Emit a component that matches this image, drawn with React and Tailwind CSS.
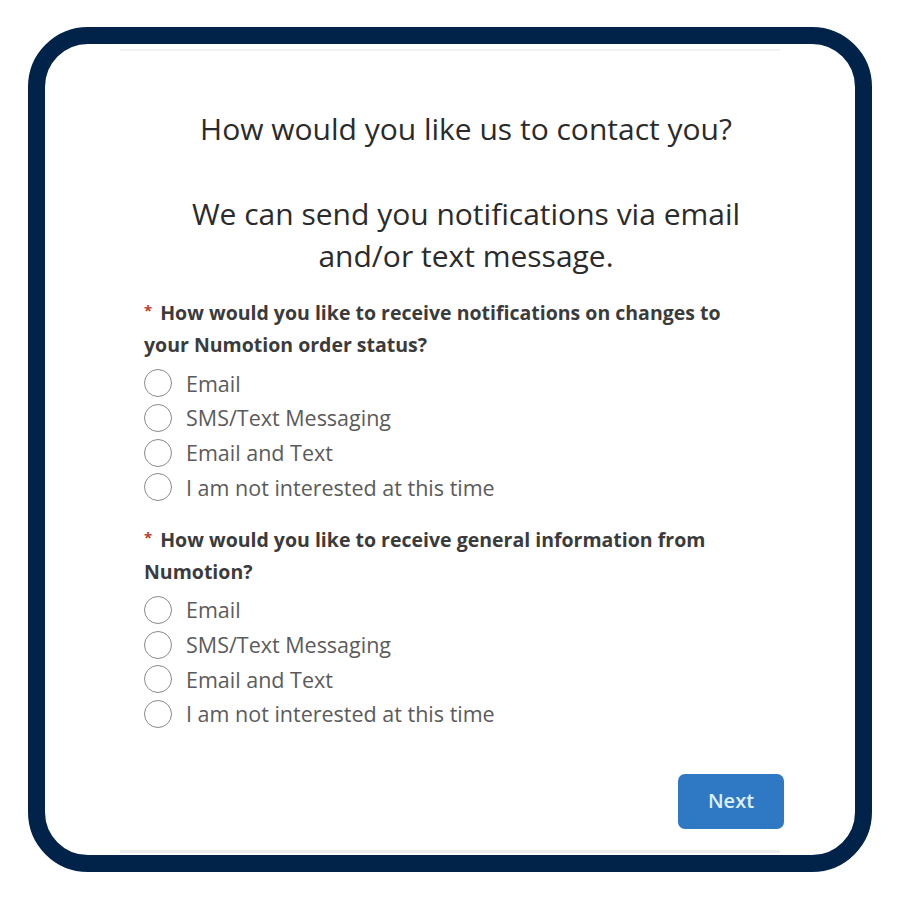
import React from "react";

const OPTIONS = ["Email", "SMS/Text Messaging", "Email and Text", "I am not interested at this time"];

function Radio({ label }) {
  return (
    <label className="flex items-center h-[34.7px]">
      <span className="w-[28px] h-[28px] rounded-full border-[1.5px] border-[#8a8a8a] bg-white shrink-0" />
      <span className="ml-[14px] text-[21.5px] text-[#5b5b5b] leading-none">{label}</span>
    </label>
  );
}

function Question({ children }) {
  return (
    <div>
      <p className="max-w-[600px] text-[19.5px] font-bold text-[#3b3b3b] leading-[32px]">
        <span className="inline-block text-[#c23934] text-[15px] leading-none align-top mt-[6px] mr-[8px]">*</span>
        {children}
      </p>
      <div className="mt-[5px] flex flex-col">
        {OPTIONS.map((o) => (
          <Radio key={o} label={o} />
        ))}
      </div>
    </div>
  );
}

export default function App() {
  return (
    <div className="w-[900px] h-[900px] bg-white pt-[27px] pl-[28px]" style={{ fontFamily: '"Open Sans", "Noto Sans", sans-serif' }}>
      <div className="w-[844px] h-[845px] border-[17px] border-[#012249] rounded-[60px] bg-white overflow-hidden flex flex-col">
        <div className="mx-[75px] h-[2px] bg-[#f2f2f2] mt-[5px]" />
        <div className="pl-[99px] pr-[67px] pt-[58px] flex flex-col flex-1">
          <h1 className="text-center text-[30px] text-[#2b2b2b] leading-[40px]">How would you like us to contact you?</h1>
          <p className="text-center text-[30px] text-[#2b2b2b] leading-[42px] mt-[44px] px-[20px]">
            We can send you notifications via email and/or text message.
          </p>
          <div className="mt-[20px]">
            <Question>How would you like to receive notifications on changes to your Numotion order status?</Question>
          </div>
          <div className="mt-[19px]">
            <Question>How would you like to receive general information from Numotion?</Question>
          </div>
          <div className="flex justify-end mt-[42px] pr-[4px]">
            <button className="w-[106px] h-[55px] rounded-[7px] bg-[#2f78c4] text-[#dcefff] text-[20px] font-semibold">Next</button>
          </div>
        </div>
        <div className="mx-[75px] h-[3px] bg-[#ececec] mb-[2px]" />
      </div>
    </div>
  );
}
